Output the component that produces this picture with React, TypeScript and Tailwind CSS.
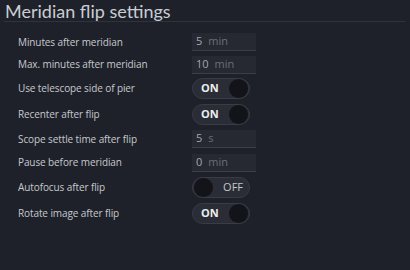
import React from 'react';

type Row =
  | { kind: 'input'; label: string; value: string; unit: string; h: string }
  | { kind: 'toggle'; label: string; on: boolean; h: string };

const rows: Row[] = [
  { kind: 'input', label: 'Minutes after meridian', value: '5', unit: 'min', h: 'h-[22px]' },
  { kind: 'input', label: 'Max. minutes after meridian', value: '10', unit: 'min', h: 'h-[23px]' },
  { kind: 'toggle', label: 'Use telescope side of pier', on: true, h: 'h-[25px]' },
  { kind: 'toggle', label: 'Recenter after flip', on: true, h: 'h-[26px]' },
  { kind: 'input', label: 'Scope settle time after flip', value: '5', unit: 's', h: 'h-[24px]' },
  { kind: 'input', label: 'Pause before meridian', value: '0', unit: 'min', h: 'h-[23px]' },
  { kind: 'toggle', label: 'Autofocus after flip', on: false, h: 'h-[26px]' },
  { kind: 'toggle', label: 'Rotate image after flip', on: true, h: 'h-[26px]' },
];

function NumberField({ value, unit }: { value: string; unit: string }) {
  return (
    <div className="flex items-center w-[64px] h-[18px] bg-[#262931] border-b border-[#3a3e46] pl-[4px] text-[11px]">
      <span className="text-[#a3a7ae]">{value}</span>
      <span className="ml-[6px] text-[#6b6f77]">{unit}</span>
    </div>
  );
}

function Toggle({ on }: { on: boolean }) {
  return (
    <div className="relative flex items-center w-[58px] h-[21px] rounded-full bg-[#2a2d35] border border-[#393c44]">
      {on ? (
        <>
          <span className="ml-[8px] text-[11px] font-bold text-[#eceef0]">ON</span>
          <span className="absolute right-[1px] top-[0px] w-[19px] h-[19px] rounded-full bg-[#121419]" />
        </>
      ) : (
        <>
          <span className="absolute left-[1px] top-[0px] w-[19px] h-[19px] rounded-full bg-[#121419]" />
          <span className="ml-auto mr-[6px] text-[11px] text-[#c4c7cc]">OFF</span>
        </>
      )}
    </div>
  );
}

export default function App() {
  return (
    <div
      className="w-[410px] h-[270px] bg-[#1e2129] overflow-hidden"
      style={{ fontFamily: '"Open Sans", "Noto Sans", sans-serif' }}
    >
      <div className="px-[4px]">
        <div className="h-[23px] border-b border-[#2f333b] w-[401px]">
          <h1
            className="pl-[1px] text-[18px] leading-[24px] text-[#c9cdd4] -mt-[1px]"
            style={{ fontFamily: 'Lato, "Open Sans", sans-serif' }}
          >
            Meridian flip settings
          </h1>
        </div>
      </div>
      <div className="flex flex-col mt-[9px]">
        {rows.map((row) => (
          <div key={row.label} className={`flex items-center ${row.h}`}>
            <div className="w-[192px] pl-[18px] text-[10px] tracking-[-0.1px] text-[#c6c9ce]">{row.label}</div>
            {row.kind === 'input' ? (
              <NumberField value={row.value} unit={row.unit} />
            ) : (
              <Toggle on={row.on} />
            )}
          </div>
        ))}
      </div>
    </div>
  );
}
